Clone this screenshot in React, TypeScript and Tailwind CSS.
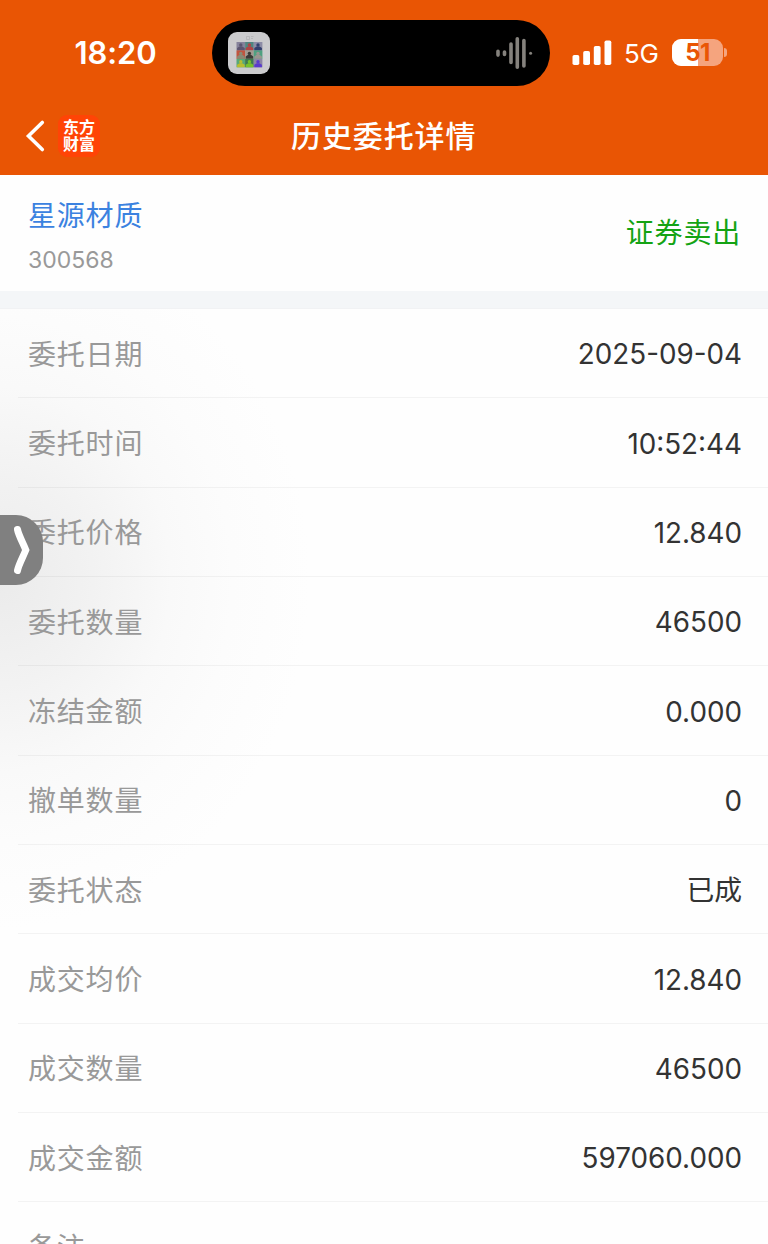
import React from 'react';

interface DetailRow {
    label: string;
    value: string;
}

const ROWS: DetailRow[] = [
    { label: '委托日期', value: '2025-09-04' },
    { label: '委托时间', value: '10:52:44' },
    { label: '委托价格', value: '12.840' },
    { label: '委托数量', value: '46500' },
    { label: '冻结金额', value: '0.000' },
    { label: '撤单数量', value: '0' },
    { label: '委托状态', value: '已成' },
    { label: '成交均价', value: '12.840' },
    { label: '成交数量', value: '46500' },
    { label: '成交金额', value: '597060.000' },
    { label: '备注', value: '' },
];

// back / figure colours of the 3x3 cover art
const TILES = [
    ['#85829a', '#5b5470'],
    ['#4f8580', '#b04444'],
    ['#8d8ca6', '#33406e'],
    ['#c0553f', '#8a8a74'],
    ['#a39a90', '#3c3a36'],
    ['#4fa080', '#9a9690'],
    ['#58a878', '#b9bd30'],
    ['#3f7a50', '#78c22c'],
    ['#8c86a4', '#5a3ccc'],
];

const NowPlayingTile = () => (
    <svg viewBox="0 0 42 42" className="w-[42px] h-[42px]">
        <rect width="42" height="42" rx="9" fill="#cbcbcd" />
        <path d="M18.500 4.500h3v3h-3zM23 4.500h2.500M23 6.500h2" fill="none" stroke="#b0b0b2" strokeWidth="0.700" />
        {TILES.map(([back, figure], i) => {
            const x = 8.5 + (i % 3) * 8.6;
            const y = 10 + Math.floor(i / 3) * 8.4;
            return (
                <g key={i}>
                    <rect x={x} y={y} width="8.700" height="8.500" fill={back} />
                    <circle cx={x + 4.3} cy={y + 3} r="1.700" fill={figure} />
                    <path d={`M${x + 0.6} ${y + 8.4}v-2.400l2.400-1.600h2.800l2.400 1.600v2.400z`} fill={figure} />
                </g>
            );
        })}
    </svg>
);

const Waveform = () => (
    <svg viewBox="0 0 38 34" className="w-[38px] h-[34px]" stroke="#85827d" strokeWidth="3.600" strokeLinecap="round">
        <path d="M3 15.300v3.800M9.500 16v2.400M16 8v18.500M22.300 2.800v28.400M28.900 4.500v25.500" />
        <path d="M35.600 17.200v0.100" strokeWidth="3" />
    </svg>
);

const StatusBar = () => (
    <div className="flex items-start h-[97px] pt-5 text-white">
        <div className="w-[212px] pl-[74.500px] pt-[13px] text-[31px] leading-10 font-semibold tracking-[-0.1px]">18:20</div>
        <div className="w-[338px] h-[66px] rounded-full bg-black flex items-center justify-between pl-4 pr-[17px]">
            <NowPlayingTile />
            <Waveform />
        </div>
        <div className="flex items-center h-[66px] pl-[22px]">
            <svg viewBox="0 0 42 26" className="w-[42px] h-[26px] mt-[-1px]" fill="#fff">
                <rect x="0.500" y="15" width="6.800" height="10" rx="1.800" />
                <rect x="11.200" y="11" width="6.800" height="14" rx="1.800" />
                <rect x="21.800" y="6" width="6.800" height="19" rx="1.800" />
                <rect x="32.500" y="0.500" width="6.800" height="24.500" rx="1.800" />
            </svg>
            <span className="w-[36px] ml-[10px] mt-px text-[26px] leading-8 tracking-[-0.4px]">5G</span>
            <div className="relative w-[51px] h-[27px] ml-3 mt-[-2px] rounded-[9px] bg-[#f5a47e] flex items-center justify-center">
                <div className="absolute left-0 top-0 w-[26px] h-full rounded-l-[9px] bg-white" />
                <span className="relative text-[24px] leading-[27px] font-bold text-[#e95504] tracking-[-0.5px]">51</span>
            </div>
            <div className="w-[3px] h-[9px] ml-[1px] mt-[-2px] rounded-r-full bg-[#f5a47e]" />
        </div>
    </div>
);

const TitleBar = () => (
    <div className="flex items-center h-[78px] px-6 text-white">
        <svg viewBox="0 0 22 34" className="w-[22px] h-[34px]" fill="none" stroke="#fff" strokeWidth="3.600" strokeLinecap="round">
            <path d="M18.300 3.500L4.500 17l13.800 13.500" />
        </svg>
        <div className="w-[42px] h-[42px] ml-3 rounded-[9px] bg-[#ff4406] flex flex-col items-center justify-center text-[16px] leading-[17.500px] font-bold">
            <span>东方</span>
            <span>财富</span>
        </div>
        <h1 className="ml-[191px] text-[30px] leading-10 font-medium tracking-[0.9px]">历史委托详情</h1>
    </div>
);

const StockHeader = () => (
    <div className="flex items-center justify-between h-[116px] pl-7 pr-[27px]">
        <div className="pt-[6px]">
            <div className="text-[28px] leading-10 tracking-[0.8px] text-[#3b82e0]">星源材质</div>
            <div className="mt-[8px] text-[23px] leading-8 text-[#999999]">300568</div>
        </div>
        <div className="text-[28px] leading-10 tracking-[0.8px] text-[#14a314]">证券卖出</div>
    </div>
);

export default function App() {
    return (
        <div
            lang="zh-CN"
            className="relative w-[768px] h-[1244px] overflow-hidden bg-[#fefefe] font-['Inter','Noto_Sans_CJK_SC',sans-serif]"
        >
            <header className="h-[175px] bg-[#e95504]">
                <StatusBar />
                <TitleBar />
            </header>
            <StockHeader />
            <div className="h-[18px] bg-[#f4f6f8] border-b border-[#f1f2f4]" />
            {/* soft shadow spreading out from the side handle */}
            <div className="bg-[radial-gradient(ellipse_310px_350px_at_0px_270px,#ebebeb_0%,#f2f2f2_30%,#f9f9f9_55%,#fcfcfc_75%,#fefefe_100%)]">
                {ROWS.map((row) => (
                    <div key={row.label} className="h-[89.350px] ml-[18px] pl-[10px] pr-[26px] flex items-center justify-between border-b border-black/[0.045]">
                        <span className="pt-[3px] text-[28px] leading-10 tracking-[0.8px] text-[#999999]">{row.label}</span>
                        <span className="pt-[2px] text-[27.800px] leading-10 text-[#333333]">{row.value}</span>
                    </div>
                ))}
            </div>
            <div className="absolute left-0 top-[515px] w-[43px] h-[70px] rounded-r-[27px] bg-[#808080]">
                <svg viewBox="0 0 43 70" className="w-full h-full" fill="none" stroke="#fff" strokeWidth="7" strokeLinecap="round">
                    <path d="M17.500 14.500C18.500 20 23 28 25.800 35C23 42 18.500 50 17.500 55.500" />
                </svg>
            </div>
        </div>
    );
}
